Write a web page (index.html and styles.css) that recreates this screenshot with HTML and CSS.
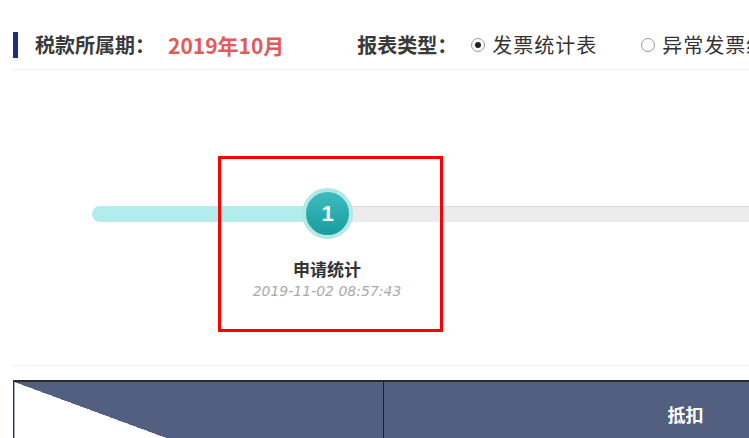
FILE: index.html
```html
<!DOCTYPE html>
<html lang="zh-CN">
<head>
  <meta charset="UTF-8" />
  <meta name="viewport" content="width=device-width, initial-scale=1.0"/>
  <title>发票统计</title>
  <link rel="stylesheet" href="styles.css">
</head>
<body>
  <div class="page">
    <!-- Period / report type -->
    <div class="tax-header">
      <span class="mark"></span>
      <span class="label">税款所属期：</span>
      <span class="period">2019年10月</span>
      <span class="label type-label">报表类型：</span>
      <label class="radio checked"><span class="dot"></span>发票统计表</label>
      <label class="radio"><span class="dot"></span>异常发票统计表</label>
    </div>

    <!-- Progress -->
    <div class="steps">
      <div class="track">
        <div class="fill"></div>
        <div class="node">1</div>
        <div class="rest"></div>
      </div>
      <div class="step-info">
        <div class="step-name">申请统计</div>
        <div class="step-time">2019-11-02 08:57:43</div>
      </div>
      <div class="highlight"></div>
    </div>

    <!-- Stats table -->
    <table class="stats">
      <tr>
        <th class="diag" rowspan="2">
          <span class="diag-row">数据类型</span>
          <span class="diag-col">票种</span>
        </th>
        <th colspan="3" class="group">抵扣</th>
      </tr>
      <tr>
        <th class="sub">份数</th>
        <th class="sub">金额</th>
        <th class="sub">税额</th>
      </tr>
    </table>
  </div>
</body>
</html>
```

FILE: styles.css
```css
body {
  margin: 0;
  background: #fff;
  font-family: "Noto Sans CJK SC", "Noto Sans", sans-serif;
  overflow: hidden;
}

.page {
  position: relative;
  width: 749px;
  height: 438px;
  overflow: hidden;
}

.tax-header {
  display: flex;
  align-items: center;
  height: 49px;
  margin: 20px 0 0 13px;
  border-bottom: 1px solid #eee;
  font-size: 20px;
  white-space: nowrap;
}

.tax-header > * {
  flex-shrink: 0;
}

.mark {
  width: 5px;
  height: 26px;
  background: #1b2f7e;
  margin-right: 17px;
}

.label {
  color: #3a3a3a;
  font-weight: bold;
}

.period {
  color: #e45a5a;
  font-weight: bold;
  font-size: 21px;
  margin-left: 13px;
}

.type-label {
  margin-left: 73px;
}

.radio {
  display: flex;
  align-items: center;
  color: #333;
  letter-spacing: 1px;
  margin-left: 14px;
}

.radio + .radio {
  margin-left: 44px;
}

.dot {
  width: 12px;
  height: 12px;
  border: 1px solid #999;
  border-radius: 50%;
  margin-right: 7px;
  position: relative;
  background: #fff;
}

.radio.checked .dot::after {
  content: "";
  position: absolute;
  left: 3px;
  top: 3px;
  width: 6px;
  height: 6px;
  border-radius: 50%;
  background: #222;
}

.steps {
  position: relative;
  height: 295px;
  margin-left: 13px;
  border-bottom: 1px solid #eee;
}

.track {
  display: flex;
  align-items: center;
  padding-top: 118px;
  margin-left: 79px;
}

.fill {
  width: 230px;
  height: 16px;
  background: #b2ecec;
  border-radius: 8px 0 0 8px;
  margin-right: -20px;
}

.node {
  position: relative;
  z-index: 1;
  width: 43px;
  height: 43px;
  border: 4px solid #b4e8e6;
  border-radius: 50%;
  background: linear-gradient(#3dbcbc, #1a9d9d);
  color: #fff;
  font-family: "Liberation Sans", Arial, sans-serif;
  font-weight: bold;
  font-size: 22px;
  display: flex;
  align-items: center;
  justify-content: center;
}

.rest {
  flex: 1;
  height: 15px;
  background: #ececec;
  border-top: 1px solid #dcdcdc;
  margin-left: -20px;
}

.step-info {
  width: 200px;
  margin: 20px 0 0 214px;
  text-align: center;
}

.step-name {
  color: #333;
  font-size: 17px;
  font-weight: bold;
  line-height: 20px;
}

.step-time {
  color: #aaa;
  font-family: "DejaVu Sans", sans-serif;
  font-style: italic;
  font-size: 14px;
  line-height: 24px;
}

.highlight {
  position: absolute;
  left: 205px;
  top: 86px;
  width: 219px;
  height: 170px;
  border: 3px solid #f00;
}

.stats {
  margin: 14px 0 0 13px;
  border-collapse: collapse;
  table-layout: fixed;
  width: 975px;
  border-top: 2px solid #2b2b2b;
  border-left: 1px solid #2b2b2b;
}

.stats th {
  background: #535f80;
  color: #fff;
  font-size: 18px;
  font-weight: bold;
  padding: 0;
  border-right: 1px solid #1e2230;
}

.stats .diag {
  width: 369px;
  position: relative;
  background: linear-gradient(to top right, #fff 50%, #535f80 50%);
  vertical-align: top;
  text-align: left;
  font-size: 17px;
}

.diag-row {
  position: absolute;
  left: 15px;
  top: 54px;
  color: #555;
}

.diag-col {
  position: absolute;
  left: 312px;
  top: 54px;
}

.stats .group {
  height: 64px;
  text-align: center;
}

.stats .sub {
  height: 72px;
  border-right: none;
}
```
